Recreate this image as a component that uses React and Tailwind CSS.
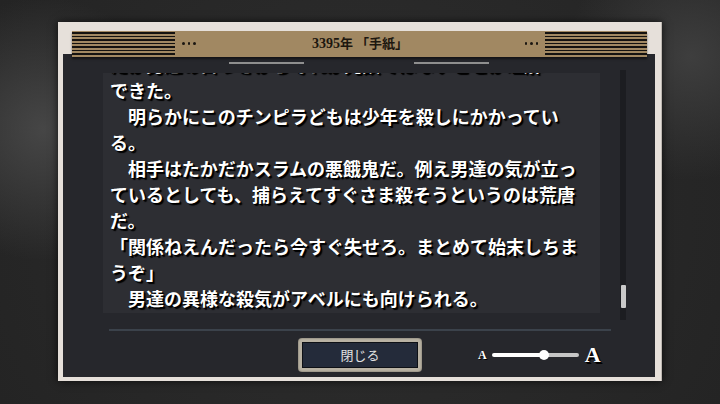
import React from "react";

const jp = "font-['Noto_Sans_CJK_JP','Noto_Sans_CJK_SC',sans-serif]";

function Stripes({ className }) {
  return (
    <div className={"flex flex-col justify-between h-[23px] " + className}>
      <div className="h-[1.6px] bg-[#141210]" />
      <div className="h-[1.6px] bg-[#141210]" />
      <div className="h-[1.6px] bg-[#141210]" />
      <div className="h-[1.6px] bg-[#141210]" />
      <div className="h-[1.6px] bg-[#141210]" />
      <div className="h-[1.6px] bg-[#141210]" />
      <div className="h-[1.6px] bg-[#141210]" />
    </div>
  );
}

function Dots() {
  return (
    <div className="flex gap-[3px]">
      <div className="w-[2.5px] h-[2.5px] rounded-full bg-[#1a1611]" />
      <div className="w-[2.5px] h-[2.5px] rounded-full bg-[#1a1611]" />
      <div className="w-[2.5px] h-[2.5px] rounded-full bg-[#1a1611]" />
    </div>
  );
}

const lines = [
  "だが男達の目つきからそれが冗談ではないことが理解",
  "できた。",
  "　明らかにこのチンピラどもは少年を殺しにかかってい",
  "る。",
  "　相手はたかだかスラムの悪餓鬼だ。例え男達の気が立っ",
  "ているとしても、捕らえてすぐさま殺そうというのは荒唐",
  "だ。",
  "「関係ねえんだったら今すぐ失せろ。まとめて始末しちま",
  "うぞ」",
  "　男達の異様な殺気がアベルにも向けられる。",
];

export default function App() {
  return (
    <div className="w-[720px] h-[404px] overflow-hidden pt-[22px] pl-[58px] bg-[#2a2a2a] bg-[radial-gradient(circle_at_6%_32%,#464646_0%,transparent_18%),radial-gradient(circle_at_96%_14%,#3e3e3e_0%,transparent_16%),radial-gradient(circle_at_50%_50%,#2e2e2e_0%,#242424_100%)]">
      <div className="w-[604px] h-[359px] bg-[#e6e0da] flex flex-col shadow-[0_0_8px_rgba(0,0,0,0.7)] border-r border-[#bdb7b1]">
        {/* header */}
        <div className="relative z-10 mt-[9px] mx-[14px] -mb-[3px] h-[26px] bg-[#a18862] flex items-center pt-[1px] pb-[2px] shadow-[0_2px_2px_rgba(0,0,0,0.5)]">
          <Stripes className="w-[103px]" />
          <div className="ml-[7px]">
            <Dots />
          </div>
          <div className="flex-1 text-center text-[13px] leading-none text-[#1d170f] font-bold">
            <span className="font-['Liberation_Serif',serif] text-[14px]">3395</span>
            <span className={jp}>年 「手紙」</span>
          </div>
          <div className="mr-[7px]">
            <Dots />
          </div>
          <Stripes className="w-[102px]" />
        </div>

        {/* panel */}
        <div className="ml-[5px] mr-[6px] mb-[4px] flex-1 bg-[#26272c] flex flex-col">
          <div className="flex justify-center gap-[110px] mt-[8px]">
            <div className="w-[75px] h-[2px] bg-[#8f8f8f]" />
            <div className="w-[75px] h-[2px] bg-[#8f8f8f]" />
          </div>

          <div className="flex items-start mt-[6px]">
            <div className="ml-[40px] mt-[3px] w-[497px] h-[240px] bg-[#2d2e33] overflow-hidden">
              <div
                className={
                  "pl-[7px] -mt-[23px] pt-[1px] text-[18px] leading-[26px] font-bold text-white whitespace-nowrap [text-shadow:1px_1px_0_#000,2px_2px_1px_#000] " +
                  jp
                }
              >
                {lines.map((l, i) => (
                  <div key={i}>{l}</div>
                ))}
              </div>
            </div>
            <div className="ml-[20px] w-[6px] h-[250px] bg-[#1c1d21] flex flex-col justify-end pb-[12px]">
              <div className="ml-[1px] w-[5px] h-[23px] bg-[#c9c9c9] rounded-[1px]" />
            </div>
          </div>

          <div className="ml-[46px] w-[502px] h-[2px] bg-[#3b424b] mt-[9px]" />

          <div className="flex items-center mt-[7px]">
            <div className="ml-[235px] w-[124px] h-[34px] rounded-[4px] bg-[#b9b2a3] p-[4px] shadow-[inset_0_0_2px_rgba(0,0,0,0.5)]">
              <div
                className={
                  "w-full h-full bg-[#242b3a] border border-[#0e1015] flex items-center justify-center text-[13px] text-[#e2e2e2] " +
                  jp
                }
              >
                閉じる
              </div>
            </div>

            <div className="ml-[56px] flex items-center">
              <span className="font-['Liberation_Serif',serif] font-bold text-[12px] text-white leading-none [text-shadow:1px_1px_0_#000]">
                A
              </span>
              <div className="relative ml-[5px] w-[87px] h-[4px] flex">
                <div className="w-[52px] h-[4px] bg-white rounded-l-full" />
                <div className="flex-1 h-[4px] bg-[#c6c6c6] rounded-r-full" />
                <div className="absolute left-[47px] -top-[3px] w-[10px] h-[10px] rounded-full bg-white" />
              </div>
              <span className="ml-[6px] font-['Liberation_Serif',serif] font-bold text-[22px] text-white leading-none [text-shadow:1px_1px_0_#000,2px_2px_0_#000]">
                A
              </span>
            </div>
          </div>
        </div>
      </div>
    </div>
  );
}
